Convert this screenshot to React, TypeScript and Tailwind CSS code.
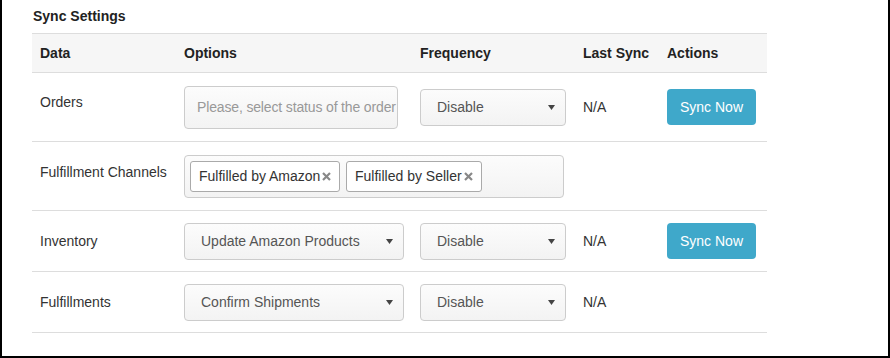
import React from "react";

const cols = "grid grid-cols-[144px_236px_163px_84px_108px]";

function Caret() {
  return (
    <svg width="7" height="5" viewBox="0 0 7 5" className="shrink-0">
      <polygon points="0,0 7,0 3.5,5" fill="#444" />
    </svg>
  );
}

function Select({ value, width }: { value: string; width: string }) {
  return (
    <div
      className={`${width} h-[37px] flex items-center justify-between pl-[16px] pr-[10px] rounded-[4px] border border-[#ccc] bg-gradient-to-b from-[#fcfcfc] to-[#f3f3f3] text-[14px] text-[#555]`}
    >
      <span className="truncate">{value}</span>
      <Caret />
    </div>
  );
}

function SyncButton() {
  return (
    <button className="w-[89px] h-[36px] rounded-[4px] bg-[#3fa8ca] text-white text-[14px]">
      Sync Now
    </button>
  );
}

function Tag({ label, width }: { label: string; width: string }) {
  return (
    <div
      className={`${width} h-[31px] flex items-center pl-[8px] rounded-[3px] border border-[#aaa] bg-white text-[14px] text-[#333]`}
    >
      <span>{label}</span>
      <svg width="9" height="9" viewBox="0 0 9 9" className="ml-[2px] shrink-0">
        <path d="M1 1 L8 8 M8 1 L1 8" stroke="#888" strokeWidth="2.2" />
      </svg>
    </div>
  );
}

export default function App() {
  return (
    <div
      className="w-[890px] h-[358px] border-x-2 border-b-2 border-black bg-white pl-[30px] text-[#333]"
      style={{ fontFamily: '"Liberation Sans", Arial, sans-serif' }}
    >
      <h2 className="pt-[6px] h-[33px] text-[14px] leading-[20px] font-bold text-[#222] pl-[1px]">
        Sync Settings
      </h2>

      <div className="w-[735px] text-[14px]">
        {/* header */}
        <div className={`${cols} h-[40px] border-y border-[#ddd] bg-[#f6f6f6] font-bold text-[#222] items-center`}>
          <div className="px-2">Data</div>
          <div className="px-2">Options</div>
          <div className="px-2">Frequency</div>
          <div className="px-2">Last Sync</div>
          <div className="px-2">Actions</div>
        </div>

        {/* Orders */}
        <div className={`${cols} h-[69px] border-b border-[#ddd] items-center`}>
          <div className="px-2 pb-[9px]">Orders</div>
          <div className="px-2">
            <div className="w-[214px] h-[43px] flex items-center pl-[12px] rounded-[4px] border border-[#ccc] bg-gradient-to-b from-[#fcfcfc] to-[#f3f3f3] overflow-hidden whitespace-nowrap tracking-[-0.15px] text-[#999]">
              Please, select status of the order
            </div>
          </div>
          <div className="px-2">
            <Select value="Disable" width="w-[146px]" />
          </div>
          <div className="px-2">N/A</div>
          <div className="px-2">
            <SyncButton />
          </div>
        </div>

        {/* Fulfillment Channels */}
        <div className={`${cols} h-[69px] border-b border-[#ddd] items-center`}>
          <div className="px-2 pb-[8px] whitespace-nowrap">Fulfillment Channels</div>
          <div className="col-span-4 px-2">
            <div className="w-[380px] h-[43px] flex items-center gap-[6px] pl-[5px] rounded-[4px] border border-[#ccc] bg-gradient-to-b from-[#fcfcfc] to-[#f3f3f3]">
              <Tag label="Fulfilled by Amazon" width="w-[150px]" />
              <Tag label="Fulfilled by Seller" width="w-[136px]" />
            </div>
          </div>
        </div>

        {/* Inventory */}
        <div className={`${cols} h-[61px] border-b border-[#ddd] items-center`}>
          <div className="px-2">Inventory</div>
          <div className="px-2">
            <Select value="Update Amazon Products" width="w-[220px]" />
          </div>
          <div className="px-2">
            <Select value="Disable" width="w-[146px]" />
          </div>
          <div className="px-2">N/A</div>
          <div className="px-2">
            <SyncButton />
          </div>
        </div>

        {/* Fulfillments */}
        <div className={`${cols} h-[61px] border-b border-[#ddd] items-center`}>
          <div className="px-2">Fulfillments</div>
          <div className="px-2">
            <Select value="Confirm Shipments" width="w-[220px]" />
          </div>
          <div className="px-2">
            <Select value="Disable" width="w-[146px]" />
          </div>
          <div className="px-2">N/A</div>
          <div className="px-2" />
        </div>
      </div>
    </div>
  );
}
